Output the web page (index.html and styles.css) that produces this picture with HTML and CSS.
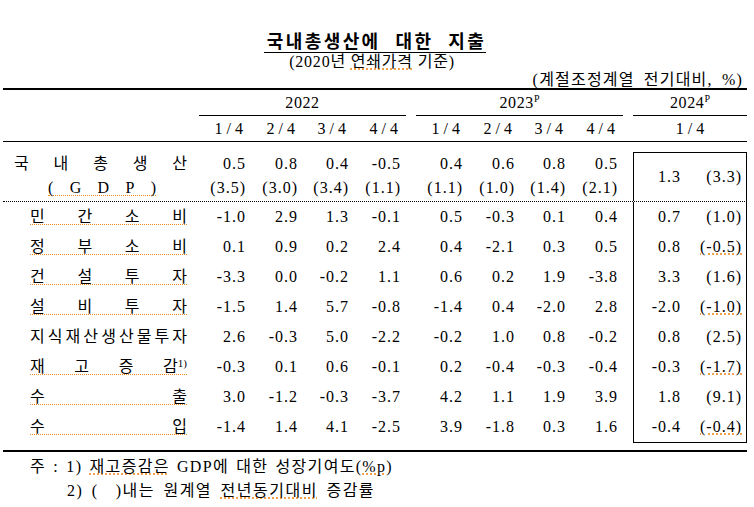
FILE: index.html
```html
<!DOCTYPE html>
<html lang="ko">
<head>
<meta charset="utf-8">
<title>국내총생산에 대한 지출</title>
<link rel="stylesheet" href="styles.css">
</head>
<body>
<div class="page">
  <div class="title-wrap"><h1 class="title">국내총생산에 대한 지출</h1></div>
  <div class="subtitle">(2020년 <span class="sp">연쇄가격</span> 기준)</div>
  <div class="unit">(계절조정계열 전기대비, %)</div>

  <div class="table">
    <div class="head">
      <div class="row yr">
        <div class="c-label"></div>
        <div class="year">2022</div>
        <div class="gap"></div>
        <div class="year">2023<sup>P</sup></div>
        <div class="gap"></div>
        <div class="year y24">2024<sup>P</sup></div>
      </div>
      <div class="row qt">
        <div class="c-label"></div>
        <div class="q">1/4</div><div class="q">2/4</div><div class="q">3/4</div><div class="q">4/4</div>
        <div class="gap"></div>
        <div class="q">1/4</div><div class="q">2/4</div><div class="q">3/4</div><div class="q">4/4</div>
        <div class="gap"></div>
        <div class="q q24">1/4</div>
      </div>
    </div>

    <div class="body">
      <div class="row gdp">
        <div class="c-label g">
          <div class="l1"><span>국</span><span>내</span><span>총</span><span>생</span><span>산</span></div>
          <div class="l2"><span>(</span><span>G</span><span>D</span><span>P</span><span>)</span></div>
        </div>
        <div class="n two">0.5<br>(3.5)</div>
        <div class="n two">0.8<br>(3.0)</div>
        <div class="n two">0.4<br>(3.4)</div>
        <div class="n two">-0.5<br>(1.1)</div>
        <div class="gap"></div>
        <div class="n two">0.4<br>(1.1)</div>
        <div class="n two">0.6<br>(1.0)</div>
        <div class="n two">0.8<br>(1.4)</div>
        <div class="n two">0.5<br>(2.1)</div>
        <div class="gap"></div>
        <div class="n b1">1.3</div>
        <div class="n b2">(3.3)</div>
      </div>

      <div class="row data">
        <div class="c-label"><div class="lab"><span>민</span><span>간</span><span>소</span><span>비</span></div></div>
        <div class="n">-1.0</div><div class="n">2.9</div><div class="n">1.3</div><div class="n">-0.1</div>
        <div class="gap"></div>
        <div class="n">0.5</div><div class="n">-0.3</div><div class="n">0.1</div><div class="n">0.4</div>
        <div class="gap"></div>
        <div class="n b1">0.7</div><div class="n b2">(1.0)</div>
      </div>

      <div class="row data">
        <div class="c-label"><div class="lab"><span>정</span><span>부</span><span>소</span><span>비</span></div></div>
        <div class="n">0.1</div><div class="n">0.9</div><div class="n">0.2</div><div class="n">2.4</div>
        <div class="gap"></div>
        <div class="n">0.4</div><div class="n">-2.1</div><div class="n">0.3</div><div class="n">0.5</div>
        <div class="gap"></div>
        <div class="n b1">0.8</div><div class="n b2"><span class="spn">(-0.5)</span></div>
      </div>

      <div class="row data">
        <div class="c-label"><div class="lab"><span>건</span><span>설</span><span>투</span><span>자</span></div></div>
        <div class="n">-3.3</div><div class="n">0.0</div><div class="n">-0.2</div><div class="n">1.1</div>
        <div class="gap"></div>
        <div class="n">0.6</div><div class="n">0.2</div><div class="n">1.9</div><div class="n">-3.8</div>
        <div class="gap"></div>
        <div class="n b1">3.3</div><div class="n b2">(1.6)</div>
      </div>

      <div class="row data">
        <div class="c-label"><div class="lab"><span>설</span><span>비</span><span>투</span><span>자</span></div></div>
        <div class="n">-1.5</div><div class="n">1.4</div><div class="n">5.7</div><div class="n">-0.8</div>
        <div class="gap"></div>
        <div class="n">-1.4</div><div class="n">0.4</div><div class="n">-2.0</div><div class="n">2.8</div>
        <div class="gap"></div>
        <div class="n b1">-2.0</div><div class="n b2"><span class="spn">(-1.0)</span></div>
      </div>

      <div class="row data">
        <div class="c-label"><div class="lab plain"><span>지</span><span>식</span><span>재</span><span>산</span><span>생</span><span>산</span><span>물</span><span>투</span><span>자</span></div></div>
        <div class="n">2.6</div><div class="n">-0.3</div><div class="n">5.0</div><div class="n">-2.2</div>
        <div class="gap"></div>
        <div class="n">-0.2</div><div class="n">1.0</div><div class="n">0.8</div><div class="n">-0.2</div>
        <div class="gap"></div>
        <div class="n b1">0.8</div><div class="n b2">(2.5)</div>
      </div>

      <div class="row data">
        <div class="c-label"><div class="lab"><span>재</span><span>고</span><span>증</span><span>감<sup class="fn">1)</sup></span></div></div>
        <div class="n">-0.3</div><div class="n">0.1</div><div class="n">0.6</div><div class="n">-0.1</div>
        <div class="gap"></div>
        <div class="n">0.2</div><div class="n">-0.4</div><div class="n">-0.3</div><div class="n">-0.4</div>
        <div class="gap"></div>
        <div class="n b1">-0.3</div><div class="n b2"><span class="spn">(-1.7)</span></div>
      </div>

      <div class="row data">
        <div class="c-label"><div class="lab"><span>수</span><span>출</span></div></div>
        <div class="n">3.0</div><div class="n">-1.2</div><div class="n">-0.3</div><div class="n">-3.7</div>
        <div class="gap"></div>
        <div class="n">4.2</div><div class="n">1.1</div><div class="n">1.9</div><div class="n">3.9</div>
        <div class="gap"></div>
        <div class="n b1">1.8</div><div class="n b2">(9.1)</div>
      </div>

      <div class="row data last">
        <div class="c-label"><div class="lab"><span>수</span><span>입</span></div></div>
        <div class="n">-1.4</div><div class="n">1.4</div><div class="n">4.1</div><div class="n">-2.5</div>
        <div class="gap"></div>
        <div class="n">3.9</div><div class="n">-1.8</div><div class="n">0.3</div><div class="n">1.6</div>
        <div class="gap"></div>
        <div class="n b1">-0.4</div><div class="n b2"><span class="spn">(-0.4)</span></div>
      </div>
    </div>
  </div>

  <div class="notes">
    <div class="note1">주 : 1) <span class="sp">재고증감은</span> GDP에 대한 성장기여도(<span class="sp">%p</span>)</div>
    <div class="note2">2) (<span class="blank"></span>)내는 원계열 <span class="sp">전년동기대비</span> 증감률</div>
  </div>
</div>
</body>
</html>
```

FILE: styles.css
```css
* {
  box-sizing: border-box;
  margin: 0;
  padding: 0;
}

body {
  margin: 0;
  background: #fff;
  color: #000;
  font-family: "Liberation Serif", "Noto Sans CJK KR", serif;
  font-size: 16px;
}

.page {
  width: 754px;
  padding: 32px 7px 0 3px;
}

.title-wrap {
  text-align: center;
  height: 21px;
}

.title {
  display: inline-block;
  font-size: 18px;
  font-weight: bold;
  line-height: 20px;
  letter-spacing: 2.4px;
  word-spacing: 8px;
  padding: 0 0 0 3px;
  border-bottom: 1px solid #000;
}

.subtitle {
  text-align: center;
  line-height: 18px;
  letter-spacing: 0.8px;
  padding-right: 6px;
}

.unit {
  text-align: right;
  line-height: 17px;
  padding-right: 4px;
  letter-spacing: 1.2px;
  word-spacing: 4px;
}

.sp {
  text-decoration: underline dotted #ee8a20;
  text-underline-offset: 2px;
}

.table {
  border-top: 2px solid #000;
  border-bottom: 2px solid #000;
}

.row {
  display: grid;
  grid-template-columns: 196px 52px 52px 51px 52px 10px 52px 52px 51px 52px 10px 57px 57px;
}

.head {
  border-bottom: 1px solid #000;
}

.yr {
  height: 26px;
}

.year {
  grid-column: span 4;
  text-align: center;
  line-height: 25px;
  border-bottom: 1px solid #000;
  letter-spacing: 0.6px;
}

.y24 {
  grid-column: span 2;
}

.year sup {
  font-size: 10px;
  line-height: 0;
  vertical-align: 6px;
  letter-spacing: 0;
}

.qt {
  height: 25px;
  line-height: 25px;
}

.q {
  text-align: right;
  padding-right: 4px;
  letter-spacing: 4px;
}

.q24 {
  grid-column: span 2;
  text-align: center;
  padding: 0 0 0 4px;
}

.body {
  padding: 10px 0 8px;
}

.gdp {
  height: 50px;
  border-bottom: 1px dotted #000;
}

.data {
  height: 30px;
  line-height: 30px;
}

.n {
  text-align: right;
  padding-right: 5px;
  letter-spacing: 1px;
}

.two {
  line-height: 24px;
}

.b1 {
  border-left: 1px solid #000;
  padding-right: 9px;
}

.b2 {
  border-right: 1px solid #000;
  padding-right: 4px;
}

.gdp .b1,
.gdp .b2 {
  border-top: 1px solid #000;
  display: flex;
  align-items: center;
  justify-content: flex-end;
}

.last .b1,
.last .b2 {
  border-bottom: 1px solid #000;
}

.spn {
  text-decoration: underline dotted #ee8a20;
  text-underline-offset: 2px;
}

.c-label {
  display: flex;
  align-items: center;
  padding: 0 12px 0 27px;
}

.lab {
  display: flex;
  justify-content: space-between;
  width: 100%;
  height: 15px;
  line-height: 14px;
  border-bottom: 1px dotted #ee8a20;
}

.lab.plain {
  border-bottom-color: transparent;
}

.fn {
  font-size: 11px;
  line-height: 0;
  vertical-align: 5px;
}

.c-label.g {
  flex-direction: column;
  align-items: stretch;
  padding: 0;
}

.g .l1 {
  display: flex;
  justify-content: space-between;
  margin: 0 12px 0 11px;
  height: 24px;
  line-height: 24px;
}

.g .l2 {
  display: flex;
  justify-content: space-between;
  margin: 5px 0 0 45px;
  width: 108px;
  height: 15px;
  line-height: 14px;
  border-bottom: 1px dotted #ee8a20;
}

.notes {
  padding-top: 3px;
  line-height: 24px;
}

.note1 {
  padding-left: 27px;
  letter-spacing: 1.3px;
  word-spacing: 2px;
}

.note2 {
  padding-left: 64px;
  letter-spacing: 1.5px;
  word-spacing: 3px;
}

.blank {
  display: inline-block;
  width: 17px;
}
```
